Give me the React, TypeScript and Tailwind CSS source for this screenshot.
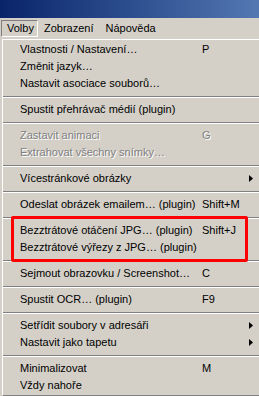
import React from 'react';

type Item =
  | { sep: true }
  | { label: string; shortcut?: string; sub?: boolean; disabled?: boolean; sep?: false };

const items: Item[] = [
  { label: 'Vlastnosti / Nastavení…', shortcut: 'P' },
  { label: 'Změnit jazyk…' },
  { label: 'Nastavit asociace souborů…' },
  { sep: true },
  { label: 'Spustit přehrávač médií (plugin)' },
  { sep: true },
  { label: 'Zastavit animaci', shortcut: 'G', disabled: true },
  { label: 'Extrahovat všechny snímky…', disabled: true },
  { sep: true },
  { label: 'Vícestránkové obrázky', sub: true },
  { sep: true },
  { label: 'Odeslat obrázek emailem… (plugin)', shortcut: 'Shift+M' },
  { sep: true },
  { label: 'Bezztrátové otáčení JPG… (plugin)', shortcut: 'Shift+J' },
  { label: 'Bezztrátové výřezy z JPG… (plugin)' },
  { sep: true },
  { label: 'Sejmout obrazovku / Screenshot…', shortcut: 'C' },
  { sep: true },
  { label: 'Spustit OCR… (plugin)', shortcut: 'F9' },
  { sep: true },
  { label: 'Setřídit soubory v adresáři', sub: true },
  { label: 'Nastavit jako tapetu', sub: true },
  { sep: true },
  { label: 'Minimalizovat', shortcut: 'M' },
  { label: 'Vždy nahoře' },
];

const Arrow = () => (
  <svg width="4" height="7" viewBox="0 0 4 7" className="block">
    <path d="M0 0 L4 3.5 L0 7 Z" fill="#000" />
  </svg>
);

const MenuRow: React.FC<{ item: Exclude<Item, { sep: true }> }> = ({ item }) => {
  const txt = item.disabled
    ? 'text-[#808080] [text-shadow:1px_1px_0_#ffffff]'
    : 'text-black';
  return (
    <div className={`flex items-center h-[17px] pl-[17px] whitespace-nowrap ${txt}`}>
      <span className="w-[182px] shrink-0">{item.label}</span>
      <span className="w-[47px] shrink-0">{item.shortcut ?? ''}</span>
      {item.sub && <Arrow />}
    </div>
  );
};

export default function App() {
  return (
    <div className="relative w-[259px] h-[396px] overflow-hidden bg-[#d4d0c8] font-['Liberation_Sans',Arial,sans-serif] text-[11px] leading-none">
      <div className="h-[18px] bg-gradient-to-r from-[#0a246a] to-[#5478b2]" />
      <div className="flex items-center h-[20px] whitespace-nowrap">
        <div className="flex items-center shrink-0 h-[17px] ml-[1px] pl-[5px] w-[37px] border border-t-[#808080] border-l-[#808080] border-b-white border-r-white">
          Volby
        </div>
        <div className="shrink-0 ml-[6px]">Zobrazení</div>
        <div className="shrink-0 ml-[12px]">Nápověda</div>
      </div>
      <div className="ml-[1px] w-[280px] border border-t-[#d4d0c8] border-l-[#d4d0c8] border-b-[#404040] border-r-[#404040]">
        <div className="border border-t-white border-l-white border-b-[#808080] border-r-[#808080] py-[1px]">
          {items.map((it, i) =>
            it.sep ? (
              <div key={i} className="h-[9px] pt-[4px]">
                <div className="border-t border-t-[#808080] border-b border-b-white" />
              </div>
            ) : (
              <MenuRow key={i} item={it} />
            )
          )}
        </div>
      </div>
      <div className="absolute left-[11px] top-[216px] w-[237px] h-[46px] border-[3px] border-[#ff0000] rounded-[2px]" />
    </div>
  );
}
